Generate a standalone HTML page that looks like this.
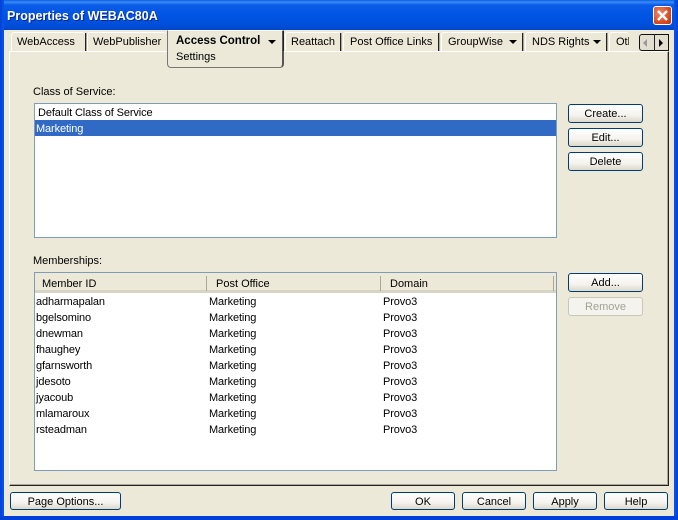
<!DOCTYPE html>
<html><head><meta charset="utf-8"><style>
html,body{margin:0;padding:0}
body{width:678px;height:520px;overflow:hidden;position:relative;background:#ece9d8;font:11px/14px "Liberation Sans",sans-serif;color:#000}
div,span{position:absolute;box-sizing:border-box;white-space:nowrap}
.t{height:14px;margin-top:1px}
.l{letter-spacing:-.12px}
.b{background:linear-gradient(#fff,#f4f3ee 60%,#dcd8ca);border:1px solid #003c74;border-radius:3px;text-align:center;line-height:19px}
.tab{top:32px;height:19px;background:#ece9d8;border-top:1px solid #fff;border-left:1px solid #fff;border-radius:3px 3px 0 0;line-height:18px}
.sep{top:33px;width:2px;height:18px;background:linear-gradient(90deg,#222 50%,#aca899 50%)}
.arr{width:0;height:0;border-left:4px solid transparent;border-right:4px solid transparent;border-top:4px solid #000}
.h{background:#aca899;top:276px;width:1px;height:15px}
</style></head><body>
<div style="left:0;top:0;width:678px;height:30px;background:linear-gradient(#0a5be0 0,#3a8cf8 2px,#0a5ce8 5px,#0054e3 16px,#0050dc 24px,#0046c8 30px)"></div>
<div style="left:0;top:0;width:4px;height:520px;background:linear-gradient(90deg,#0a3fd0,#0058ee)"></div>
<div style="left:674px;top:0;width:4px;height:520px;background:linear-gradient(90deg,#0058ee,#0a3fd0)"></div>
<div style="left:0;top:516px;width:678px;height:4px;background:#0040d8"></div>
<div style="left:7px;top:8px;font:bold 12.5px/16px 'Liberation Sans',sans-serif;color:#fff;text-shadow:1px 1px #0a2a8a">Properties of WEBAC80A</div>
<div style="left:653px;top:6px;width:19px;height:19px;border:1px solid #fff;border-radius:3px;background:radial-gradient(circle at 35% 35%,#ec8a6c,#d8481f 65%,#b93a18)"><svg width="17" height="17" style="position:absolute;left:0;top:0"><path d="M4 4L13 13M13 4L4 13" stroke="#fff" stroke-width="2.4"/></svg></div>

<div style="left:9px;top:51px;width:660px;height:435px;background:#ece9d8;border-left:1px solid #fff;border-top:1px solid #fff;border-right:1px solid #222;border-bottom:1px solid #222;box-shadow:inset -1px -1px #aca899"></div>

<div class="tab" style="left:11px;width:74px;padding-left:5px">WebAccess</div>
<div class="sep" style="left:85px"></div>
<div class="tab" style="left:87px;width:79px;padding-left:5px">WebPublisher</div>
<div class="tab" style="left:285px;width:56px;padding-left:5px">Reattach</div>
<div class="sep" style="left:340px"></div>
<div class="tab" style="left:343px;width:96px;padding-left:6px">Post Office Links</div>
<div class="sep" style="left:438px"></div>
<div class="tab" style="left:441px;width:82px;padding-left:6px">GroupWise</div>
<div class="arr" style="left:509px;top:40px"></div>
<div class="sep" style="left:522px"></div>
<div class="tab" style="left:525px;width:82px;padding-left:6px">NDS Rights</div>
<div class="arr" style="left:593px;top:40px"></div>
<div class="sep" style="left:606px"></div>
<div class="tab" style="left:609px;width:20px;padding-left:6px;overflow:hidden">Other</div>

<div style="left:167px;top:30px;width:117px;height:38px;background:#ece9d8;border:1px solid #777;border-top:1px solid #fff;border-right:2px solid #555;border-radius:0 0 4px 4px"></div>
<div style="left:283px;top:31px;width:1px;height:20px;background:#222"></div>
<div style="left:176px;top:34px;font-weight:bold;font-size:11.5px;line-height:14px">Access Control</div>
<div class="arr" style="left:268px;top:40px"></div>
<div style="left:176px;top:50px;line-height:14px">Settings</div>

<div style="left:639px;top:34px;width:30px;height:17px;border:1px solid #111;border-radius:3px 0 0 3px;background:#e2dfd0"></div>
<div style="left:654px;top:34px;width:1px;height:17px;background:#222"></div>
<div style="left:643px;top:39px;width:0;height:0;border-top:4px solid transparent;border-bottom:4px solid transparent;border-right:4px solid #999"></div>
<div style="left:659px;top:39px;width:0;height:0;border-top:4px solid transparent;border-bottom:4px solid transparent;border-left:4px solid #000"></div>

<div class="t" style="left:33px;top:84px">Class of Service:</div>
<div style="left:34px;top:103px;width:523px;height:135px;background:#fff;border:1px solid #7f9db9"></div>
<div class="t l" style="left:38px;top:105px">Default Class of Service</div>
<div style="left:35px;top:120px;width:521px;height:16px;background:#316ac5"></div>
<div class="t l" style="left:36px;top:121px;color:#fff">Marketing</div>

<div class="b" style="left:568px;top:104px;width:75px;height:19px">Create...</div>
<div class="b" style="left:568px;top:128px;width:75px;height:19px">Edit...</div>
<div class="b" style="left:568px;top:152px;width:75px;height:19px">Delete</div>

<div class="t" style="left:33px;top:253px">Memberships:</div>
<div style="left:34px;top:272px;width:523px;height:199px;background:#fff;border:1px solid #7f9db9"></div>
<div style="left:35px;top:273px;width:521px;height:20px;background:#ece9d8;border-bottom:3px solid #d8d4c4"></div>
<div class="h" style="left:206px"></div><div class="h" style="left:380px"></div><div class="h" style="left:553px"></div>
<div class="t" style="left:42px;top:276px">Member ID</div>
<div class="t" style="left:216px;top:276px">Post Office</div>
<div class="t" style="left:390px;top:276px">Domain</div>

<div class="t l" style="left:36px;top:294px">adharmapalan</div><div class="t l" style="left:209px;top:294px">Marketing</div><div class="t l" style="left:383px;top:294px">Provo3</div>
<div class="t l" style="left:36px;top:310px">bgelsomino</div><div class="t l" style="left:209px;top:310px">Marketing</div><div class="t l" style="left:383px;top:310px">Provo3</div>
<div class="t l" style="left:36px;top:326px">dnewman</div><div class="t l" style="left:209px;top:326px">Marketing</div><div class="t l" style="left:383px;top:326px">Provo3</div>
<div class="t l" style="left:36px;top:342px">fhaughey</div><div class="t l" style="left:209px;top:342px">Marketing</div><div class="t l" style="left:383px;top:342px">Provo3</div>
<div class="t l" style="left:36px;top:358px">gfarnsworth</div><div class="t l" style="left:209px;top:358px">Marketing</div><div class="t l" style="left:383px;top:358px">Provo3</div>
<div class="t l" style="left:36px;top:374px">jdesoto</div><div class="t l" style="left:209px;top:374px">Marketing</div><div class="t l" style="left:383px;top:374px">Provo3</div>
<div class="t l" style="left:36px;top:390px">jyacoub</div><div class="t l" style="left:209px;top:390px">Marketing</div><div class="t l" style="left:383px;top:390px">Provo3</div>
<div class="t l" style="left:36px;top:406px">mlamaroux</div><div class="t l" style="left:209px;top:406px">Marketing</div><div class="t l" style="left:383px;top:406px">Provo3</div>
<div class="t l" style="left:36px;top:422px">rsteadman</div><div class="t l" style="left:209px;top:422px">Marketing</div><div class="t l" style="left:383px;top:422px">Provo3</div>

<div class="b" style="left:568px;top:273px;width:75px;height:19px">Add...</div>
<div class="b" style="left:568px;top:297px;width:75px;height:19px;background:#f4f3ee;border-color:#c9c7ba;color:#a1a192">Remove</div>

<div class="b" style="left:10px;top:492px;width:111px;height:18px;line-height:18px">Page Options...</div>
<div class="b" style="left:391px;top:492px;width:64px;height:18px;line-height:18px">OK</div>
<div class="b" style="left:462px;top:492px;width:64px;height:18px;line-height:18px">Cancel</div>
<div class="b" style="left:533px;top:492px;width:64px;height:18px;line-height:18px">Apply</div>
<div class="b" style="left:604px;top:492px;width:64px;height:18px;line-height:18px">Help</div>
</body></html>
